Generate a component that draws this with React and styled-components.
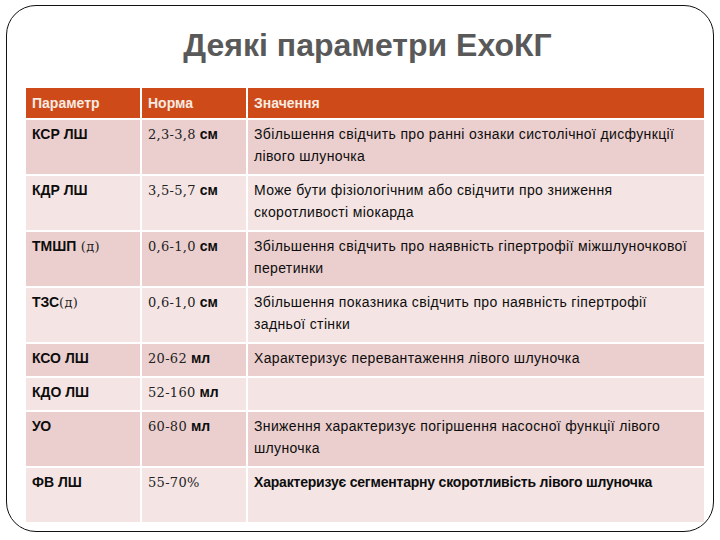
import React from 'react';
import styled, { createGlobalStyle } from 'styled-components';

const GlobalStyle = createGlobalStyle`
  html, body {
    margin: 0;
    padding: 0;
    background: #ffffff;
  }
  body {
    font-family: "Liberation Sans", Arial, sans-serif;
  }
`;

const Frame = styled.div`
  box-sizing: border-box;
  margin: 5px 0 0 6px;
  width: 708px;
  height: 527px;
  border: 1.5px solid #111;
  border-radius: 30px;
  padding: 0 8px 0 19px;
  display: flex;
  flex-direction: column;
`;

const Title = styled.h1`
  margin: 0;
  height: 82px;
  display: flex;
  align-items: center;
  justify-content: center;
  padding: 0 0 4px 4px;
  box-sizing: border-box;
  font-family: "Liberation Sans", Arial, sans-serif;
  font-size: 32px;
  font-weight: 700;
  color: #595959;
`;

const Table = styled.div`
  display: grid;
  grid-template-columns: 114px 104px 1fr;
  gap: 2px;
  width: 678px;
`;

const HeadCell = styled.div`
  background: #cf4a19;
  color: #f7ebe2;
  height: 30px;
  display: flex;
  align-items: center;
  padding: 0 6px;
  font-family: "Liberation Sans Narrow", "Liberation Sans", Arial, sans-serif;
  font-size: 14px;
  font-weight: 700;
`;

const Cell = styled.div`
  background: ${(p) => (p.$dark ? '#ebcfce' : '#f4e5e4')};
  height: ${(p) => (p.$tall ? '54px' : '32px')};
  box-sizing: border-box;
  padding: 3px 6px 0 6px;
  font-size: 14px;
  line-height: 22px;
  color: #0d0d0d;
  font-weight: ${(p) => (p.$bold ? 700 : 400)};
  overflow: hidden;
`;

const Param = styled(Cell)`
  font-weight: 700;
`;

const Serif = styled.span`
  font-family: "DejaVu Serif", "Liberation Serif", serif;
  font-weight: 400;
  font-size: 13px;
  letter-spacing: 0.3px;
  color: #222;
`;

const Unit = styled.span`
  font-weight: 700;
`;

const Desc = styled(Cell)`
  letter-spacing: ${(p) => (p.$bold ? '-0.2px' : '0.35px')};
`;

const rows = [
  { p: 'КСР ЛШ', n: '2,3-3,8', u: 'см', d: 'Збільшення свідчить про ранні ознаки систолічної дисфункції лівого шлуночка', tall: true },
  { p: 'КДР ЛШ', n: '3,5-5,7', u: 'см', d: 'Може бути фізіологічним або свідчити про зниження скоротливості міокарда', tall: true },
  { p: 'ТМШП', sfx: ' (д)', n: '0,6-1,0', u: 'см', d: 'Збільшення свідчить про наявність гіпертрофії міжшлуночкової перетинки', tall: true },
  { p: 'ТЗС', sfx: '(д)', n: '0,6-1,0', u: 'см', d: 'Збільшення показника свідчить про наявність гіпертрофії задньої стінки', tall: true },
  { p: 'КСО ЛШ', n: '20-62', u: 'мл', d: 'Характеризує перевантаження лівого шлуночка' },
  { p: 'КДО ЛШ', n: '52-160', u: 'мл', d: '' },
  { p: 'УО', n: '60-80', u: 'мл', d: 'Зниження характеризує погіршення насосної функції лівого шлуночка', tall: true },
  { p: 'ФВ ЛШ', n: '55-70%', u: '', d: 'Характеризує сегментарну скоротливість лівого шлуночка', tall: true, bold: true },
];

const App = () => {
  return (
    <>
      <GlobalStyle />
      <Frame>
        <Title>Деякі параметри ЕхоКГ</Title>
        <Table>
          <HeadCell>Параметр</HeadCell>
          <HeadCell>Норма</HeadCell>
          <HeadCell>Значення</HeadCell>
          {rows.map((r, i) => {
            const dark = i % 2 === 0;
            return (
              <React.Fragment key={r.p}>
                <Param $dark={dark} $tall={r.tall}>
                  {r.p}
                  {r.sfx && <Serif>{r.sfx}</Serif>}
                </Param>
                <Cell $dark={dark} $tall={r.tall}>
                  <Serif>{r.n}</Serif>
                  {r.u && <Unit> {r.u}</Unit>}
                </Cell>
                <Desc $dark={dark} $tall={r.tall} $bold={r.bold}>
                  {r.d}
                </Desc>
              </React.Fragment>
            );
          })}
        </Table>
      </Frame>
    </>
  );
};

export default App;
